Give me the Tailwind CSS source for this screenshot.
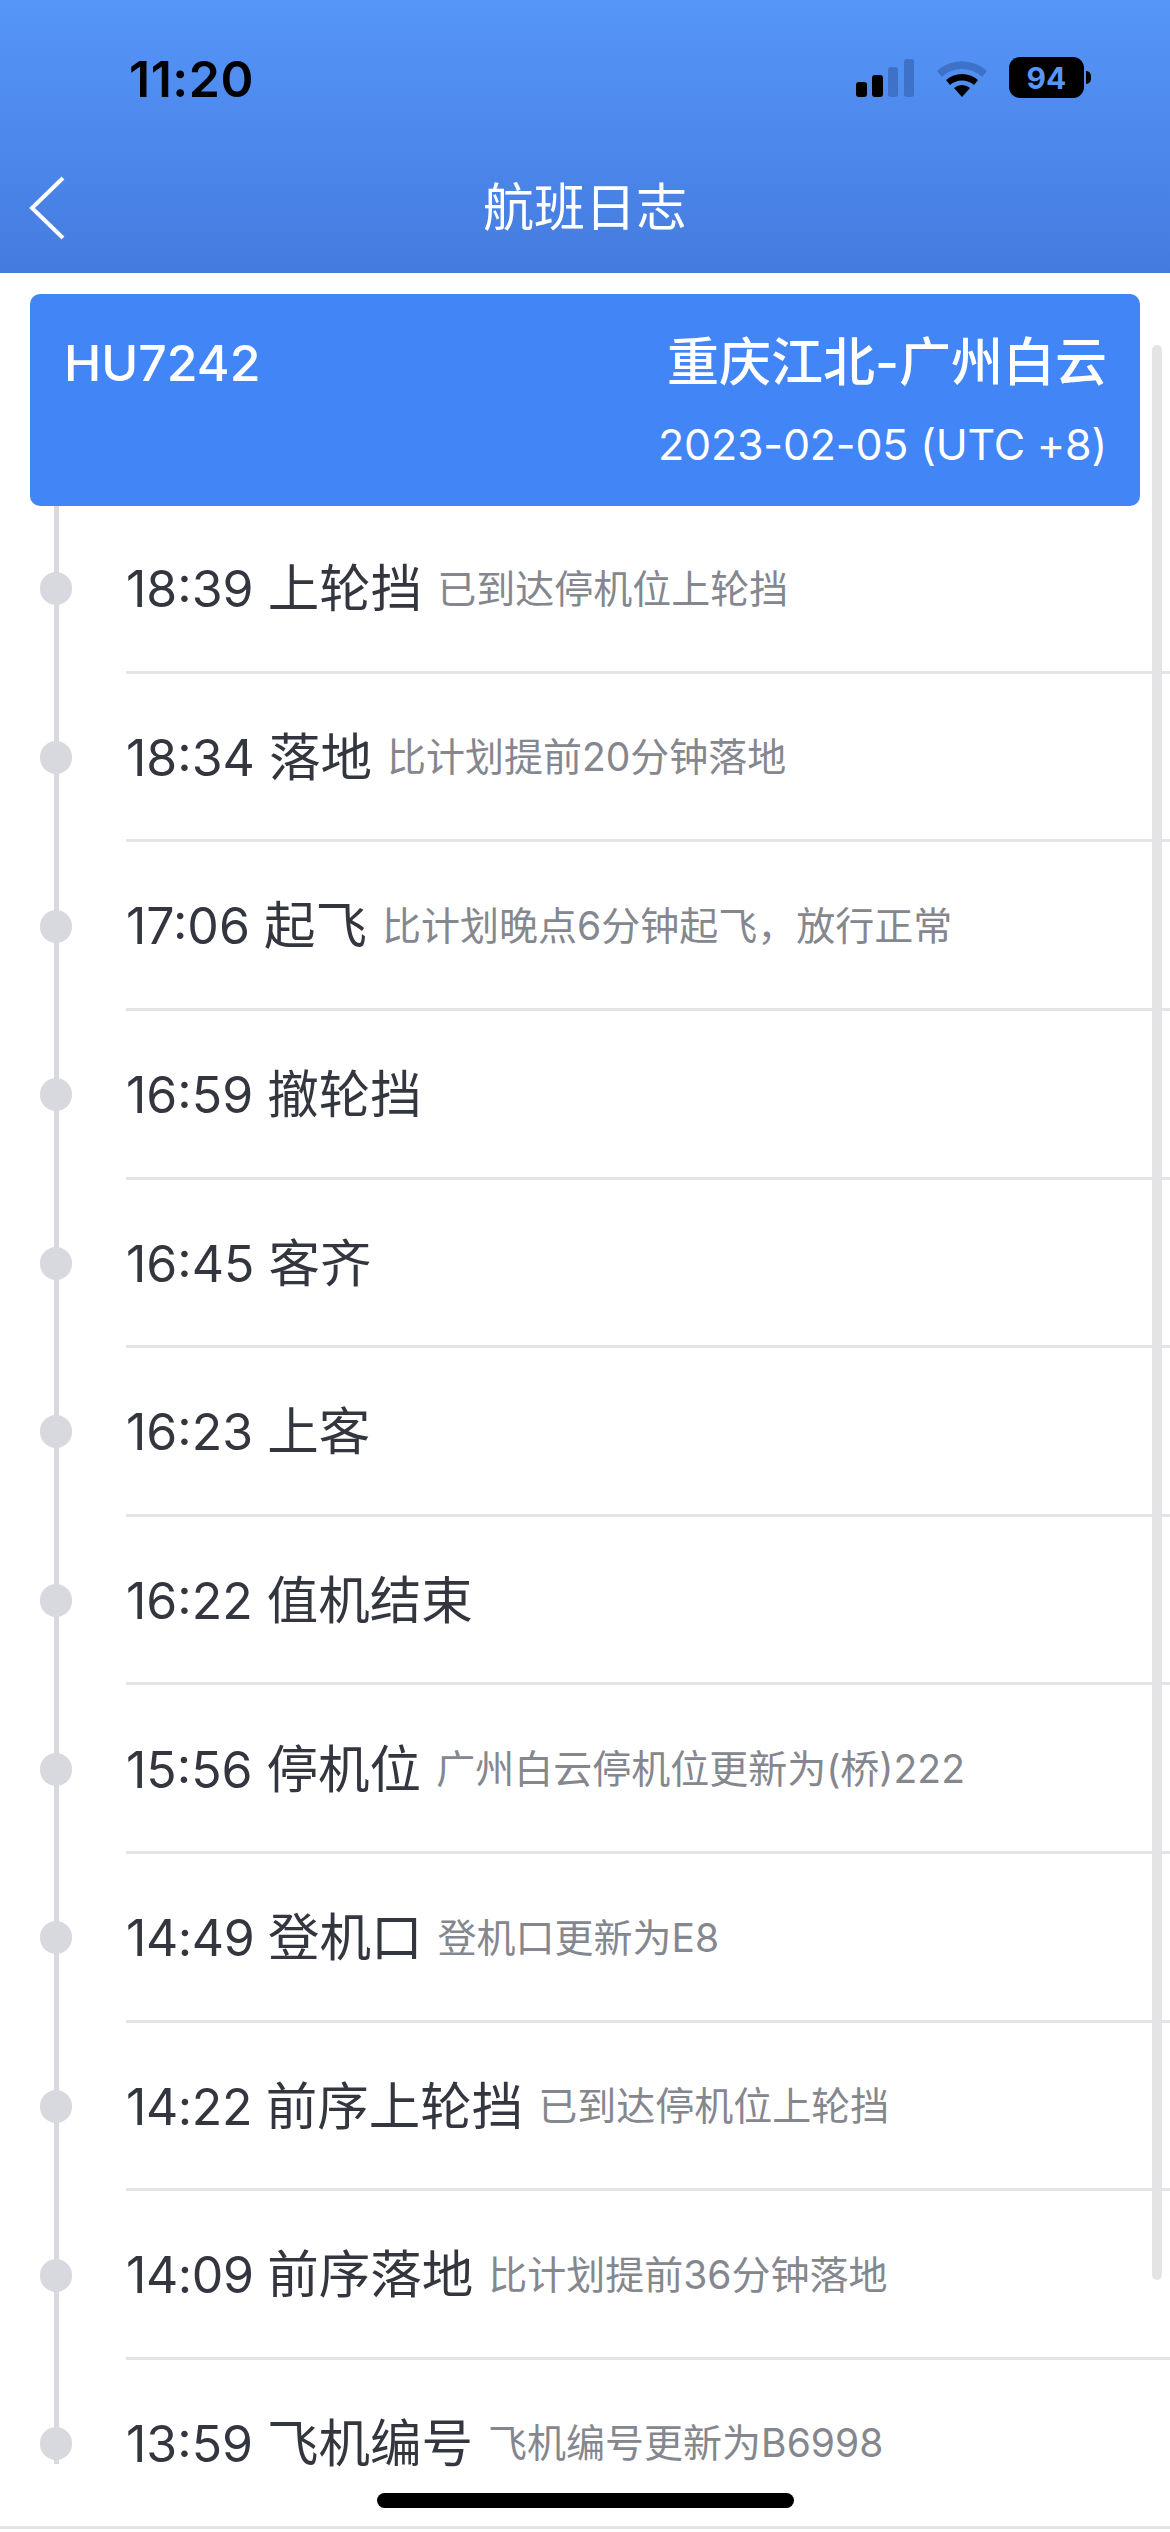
<!DOCTYPE html>
<html lang="en">
<head>
  <meta charset="UTF-8" />
  <title>航班日志</title>
  <script src="https://cdn.jsdelivr.net/npm/@tailwindcss/browser@4"></script>
</head>
<body class="bg-white font-['Inter','Noto_Sans_CJK_SC',sans-serif]">
  <div class="relative w-[1170px] h-[2532px] overflow-hidden bg-white">

    <!-- status bar + nav -->
    <header class="h-[273px] bg-gradient-to-b from-[#5596f8] to-[#457bdf] text-white">
      <div class="h-[154px] flex justify-between items-start">
        <span class="ml-[129px] mt-[50px] text-[50px] leading-[58px] font-semibold text-black tracking-[0.5px]">11:20</span>
        <div class="mr-[79px] mt-[57px] h-[41px] flex items-center">
          <svg width="59" height="38" viewBox="0 0 59 38" class="mr-[22px]">
            <rect x="0" y="23" width="11" height="15" rx="3" fill="#000"/>
            <rect x="16" y="16" width="11" height="22" rx="3" fill="#000"/>
            <rect x="32" y="8" width="10" height="30" rx="3" fill="#3e72c8"/>
            <rect x="48" y="0" width="10" height="38" rx="3" fill="#3e72c8"/>
          </svg>
          <svg width="50" height="38" viewBox="0 0 50 38" class="mr-[22px]">
            <path d="M0 12 A37 37 0 0 1 50 12 L45 18 A29 29 0 0 0 5 18 Z" fill="#3e72c8"/>
            <path d="M9 21 A24 24 0 0 1 41 21 L37 26 A18 18 0 0 0 13 26 Z" fill="#000"/>
            <path d="M17 29 A12 12 0 0 1 33 29 L25 38 Z" fill="#000"/>
          </svg>
          <div class="w-[75px] h-[41px] rounded-[11px] bg-black flex items-center justify-center text-[#5596f8] text-[30px] font-bold leading-none">94</div>
          <div class="w-[5px] h-[13px] ml-[2px] bg-black rounded-r-full"></div>
        </div>
      </div>
      <div class="relative h-[119px]">
        <svg width="40" height="64" viewBox="0 0 40 64" class="absolute left-[28px] top-[22px]">
          <path d="M35 2 L4 32 L35 62" fill="none" stroke="#fff" stroke-width="4"/>
        </svg>
        <h1 class="pt-[24px] text-center text-[51px] leading-[60px] font-normal">航班日志</h1>
      </div>
    </header>

    <!-- scrollbar -->
    <div class="absolute left-[1152px] top-[345px] w-[10px] h-[1935px] rounded-full bg-[#e4e4e7]"></div>

    <main class="relative">
      <!-- timeline line -->
      <div class="absolute left-[54px] top-[100px] w-[5px] h-[2070px] bg-[#d8d9de]"></div>

      <section class="relative z-10 mx-[30px] mt-[21px] h-[212px] rounded-[10px] bg-[#4285f6] text-white pl-[34px] pr-[33px] pt-[39px] flex justify-between">
        <span class="text-[50px] leading-[60px] font-medium">HU7242</span>
        <div class="flex flex-col items-end">
          <span class="text-[52px] leading-[60px] font-medium">重庆江北-广州白云</span>
          <span class="mt-[27px] text-[43px] leading-[48px] tracking-[-0.2px]">2023-02-05 (UTC +8)</span>
        </div>
      </section>

      <ul class="mt-[-1px]">
        <li class="relative h-[168.64px] ml-[126px] flex items-center pt-[2px] border-b-[3px] border-[#e4e4e7] gap-[15px]">
          <span class="absolute left-[-86px] w-[32px] h-[33px] rounded-full bg-[#d8d9de]"></span>
          <span class="text-[50px] text-[#33363f]">18:39 <span class="text-[51.5px]">上轮挡</span></span>
          <span class="text-[39px] text-[#85878f]">已到达停机位上轮挡</span>
        </li>
        <li class="relative h-[168.64px] ml-[126px] flex items-center pt-[2px] border-b-[3px] border-[#e4e4e7] gap-[15px]">
          <span class="absolute left-[-86px] w-[32px] h-[33px] rounded-full bg-[#d8d9de]"></span>
          <span class="text-[50px] text-[#33363f]">18:34 <span class="text-[51.5px]">落地</span></span>
          <span class="text-[39px] text-[#85878f]">比计划提前20分钟落地</span>
        </li>
        <li class="relative h-[168.64px] ml-[126px] flex items-center pt-[2px] border-b-[3px] border-[#e4e4e7] gap-[15px]">
          <span class="absolute left-[-86px] w-[32px] h-[33px] rounded-full bg-[#d8d9de]"></span>
          <span class="text-[50px] text-[#33363f]">17:06 <span class="text-[51.5px]">起飞</span></span>
          <span class="text-[39px] text-[#85878f]">比计划晚点6分钟起飞，放行正常</span>
        </li>
        <li class="relative h-[168.64px] ml-[126px] flex items-center pt-[2px] border-b-[3px] border-[#e4e4e7] gap-[15px]">
          <span class="absolute left-[-86px] w-[32px] h-[33px] rounded-full bg-[#d8d9de]"></span>
          <span class="text-[50px] text-[#33363f]">16:59 <span class="text-[51.5px]">撤轮挡</span></span>
        </li>
        <li class="relative h-[168.64px] ml-[126px] flex items-center pt-[2px] border-b-[3px] border-[#e4e4e7] gap-[15px]">
          <span class="absolute left-[-86px] w-[32px] h-[33px] rounded-full bg-[#d8d9de]"></span>
          <span class="text-[50px] text-[#33363f]">16:45 <span class="text-[51.5px]">客齐</span></span>
        </li>
        <li class="relative h-[168.64px] ml-[126px] flex items-center pt-[2px] border-b-[3px] border-[#e4e4e7] gap-[15px]">
          <span class="absolute left-[-86px] w-[32px] h-[33px] rounded-full bg-[#d8d9de]"></span>
          <span class="text-[50px] text-[#33363f]">16:23 <span class="text-[51.5px]">上客</span></span>
        </li>
        <li class="relative h-[168.64px] ml-[126px] flex items-center pt-[2px] border-b-[3px] border-[#e4e4e7] gap-[15px]">
          <span class="absolute left-[-86px] w-[32px] h-[33px] rounded-full bg-[#d8d9de]"></span>
          <span class="text-[50px] text-[#33363f]">16:22 <span class="text-[51.5px]">值机结束</span></span>
        </li>
        <li class="relative h-[168.64px] ml-[126px] flex items-center pt-[2px] border-b-[3px] border-[#e4e4e7] gap-[15px]">
          <span class="absolute left-[-86px] w-[32px] h-[33px] rounded-full bg-[#d8d9de]"></span>
          <span class="text-[50px] text-[#33363f]">15:56 <span class="text-[51.5px]">停机位</span></span>
          <span class="text-[39px] text-[#85878f]">广州白云停机位更新为(桥)222</span>
        </li>
        <li class="relative h-[168.64px] ml-[126px] flex items-center pt-[2px] border-b-[3px] border-[#e4e4e7] gap-[15px]">
          <span class="absolute left-[-86px] w-[32px] h-[33px] rounded-full bg-[#d8d9de]"></span>
          <span class="text-[50px] text-[#33363f] tracking-[-0.4px]">14:49 <span class="text-[51.5px] tracking-normal">登机口</span></span>
          <span class="text-[39px] text-[#85878f]">登机口更新为E8</span>
        </li>
        <li class="relative h-[168.64px] ml-[126px] flex items-center pt-[2px] border-b-[3px] border-[#e4e4e7] gap-[15px]">
          <span class="absolute left-[-86px] w-[32px] h-[33px] rounded-full bg-[#d8d9de]"></span>
          <span class="text-[50px] text-[#33363f] tracking-[-0.4px]">14:22 <span class="text-[51.5px] tracking-normal">前序上轮挡</span></span>
          <span class="text-[39px] text-[#85878f]">已到达停机位上轮挡</span>
        </li>
        <li class="relative h-[168.64px] ml-[126px] flex items-center pt-[2px] border-b-[3px] border-[#e4e4e7] gap-[15px]">
          <span class="absolute left-[-86px] w-[32px] h-[33px] rounded-full bg-[#d8d9de]"></span>
          <span class="text-[50px] text-[#33363f] tracking-[-0.4px]">14:09 <span class="text-[51.5px] tracking-normal">前序落地</span></span>
          <span class="text-[39px] text-[#85878f]">比计划提前36分钟落地</span>
        </li>
        <li class="relative h-[168.64px] flex items-center pt-[2px] border-b-[3px] border-[#e4e4e7]">
          <span class="absolute left-[40px] w-[32px] h-[33px] rounded-full bg-[#d8d9de]"></span>
          <div class="ml-[126px] flex items-center gap-[15px]">
            <span class="text-[50px] text-[#33363f]">13:59 <span class="text-[51.5px]">飞机编号</span></span>
            <span class="text-[39px] text-[#85878f]">飞机编号更新为B6998</span>
          </div>
        </li>
      </ul>
    </main>

    <!-- home indicator -->
    <div class="absolute left-[377px] top-[2493px] w-[417px] h-[15px] rounded-full bg-black"></div>
  </div>
</body>
</html>
